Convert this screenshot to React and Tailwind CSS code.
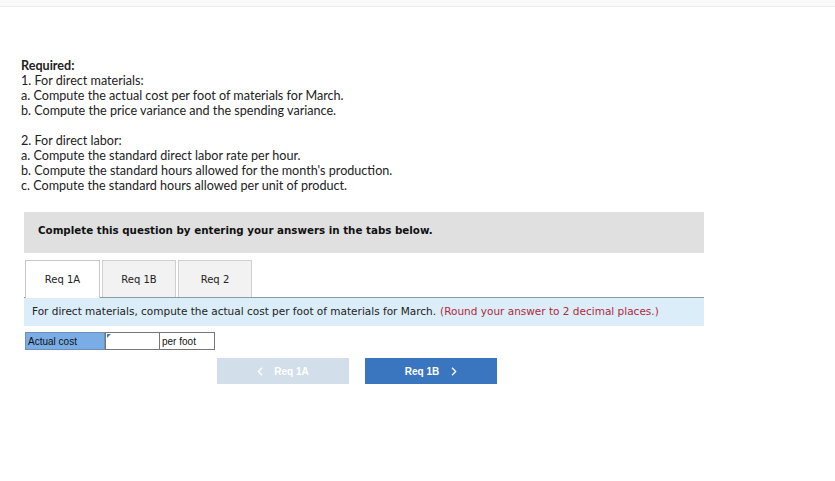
import React, { useState } from "react";

const tabs = ["Req 1A", "Req 1B", "Req 2"];

const Chevron = ({ left }) => (
  <svg width="6" height="9" viewBox="0 0 6 9" fill="none" stroke="currentColor" strokeWidth="1.3">
    {left ? <path d="M5 0.8 L1.3 4.5 L5 8.2" /> : <path d="M1 0.8 L4.7 4.5 L1 8.2" />}
  </svg>
);

const App = () => {
  const [active, setActive] = useState(0);
  const [value, setValue] = useState("");

  return (
    <div className="min-h-screen bg-white">
      <div className="h-[7px] border-b border-[#ececec] bg-[#fafafa]" />

      <div className="pl-[21px] pt-[51px] text-[12.6px] leading-[15px] text-[#222] font-['Lato',sans-serif]">
        <p className="font-bold">Required:</p>
        <p>1. For direct materials:</p>
        <p>a. Compute the actual cost per foot of materials for March.</p>
        <p>b. Compute the price variance and the spending variance.</p>
        <p className="mt-[15px]">2. For direct labor:</p>
        <p>a. Compute the standard direct labor rate per hour.</p>
        <p>b. Compute the standard hours allowed for the month's production.</p>
        <p>c. Compute the standard hours allowed per unit of product.</p>
      </div>

      <div className="ml-[24px] w-[680px] font-['DejaVu_Sans',sans-serif]">
        <div className="mt-[19px] h-[41px] flex items-center bg-[#e0e0e0] pl-[14px] pb-[3px] text-[10.3px] font-bold text-[#111]">
          Complete this question by entering your answers in the tabs below.
        </div>

        <div className="mt-[7px] flex items-end border-b border-[#8f9a9a]">
          {tabs.map((t, i) => (
            <button
              key={t}
              onClick={() => setActive(i)}
              className={
                i === active
                  ? "ml-px mr-[2px] -mb-px w-[75px] h-[38px] border border-b-0 border-[#c8c8c8] bg-white text-[10px] text-[#222]"
                  : "mr-[2px] w-[74px] h-[37px] border border-b-0 border-[#cfcfcf] bg-[#f2f2f2] text-[10px] text-[#222]"
              }
            >
              {t}
            </button>
          ))}
        </div>

        <div className="h-[28px] flex items-center bg-[#dbedf9] pl-[8px] text-[10.5px] text-[#222]">
          For direct materials, compute the actual cost per foot of materials for March.
          <span className="ml-[4px] text-[#b5273a]">(Round your answer to 2 decimal places.)</span>
        </div>

        <div className="mt-[6px] ml-px flex h-[18px] font-['Liberation_Sans',sans-serif] text-[10px]">
          <div className="w-[80px] flex items-center pl-[2px] bg-[#7aade6] border border-[#6f8fb5] text-[#111]">
            Actual cost
          </div>
          <div className="relative w-[55px] border border-[#777]">
            <span className="absolute left-[1px] top-[1px] w-0 h-0 border-t-[4px] border-r-[4px] border-t-[#4a78b8] border-r-transparent" />
            <input
              value={value}
              onChange={(e) => setValue(e.target.value)}
              className="w-full h-full px-1 outline-none bg-white"
            />
          </div>
          <div className="w-[55px] flex items-center pl-[2px] border border-l-0 border-[#777] text-[#111]">
            per foot
          </div>
        </div>

        <div className="mt-[8px] ml-[193px] flex gap-[16px] font-['Liberation_Sans',sans-serif] text-[10px] font-bold">
          <button className="w-[132px] h-[26px] bg-[#d3deeb] text-white flex items-center justify-center gap-[11px]">
            <Chevron left />
            <span>Req 1A</span>
          </button>
          <button className="w-[132px] h-[26px] bg-[#3a75c0] text-white flex items-center justify-center gap-[12px]">
            <span>Req 1B</span>
            <Chevron />
          </button>
        </div>
      </div>
    </div>
  );
};

export default App;
